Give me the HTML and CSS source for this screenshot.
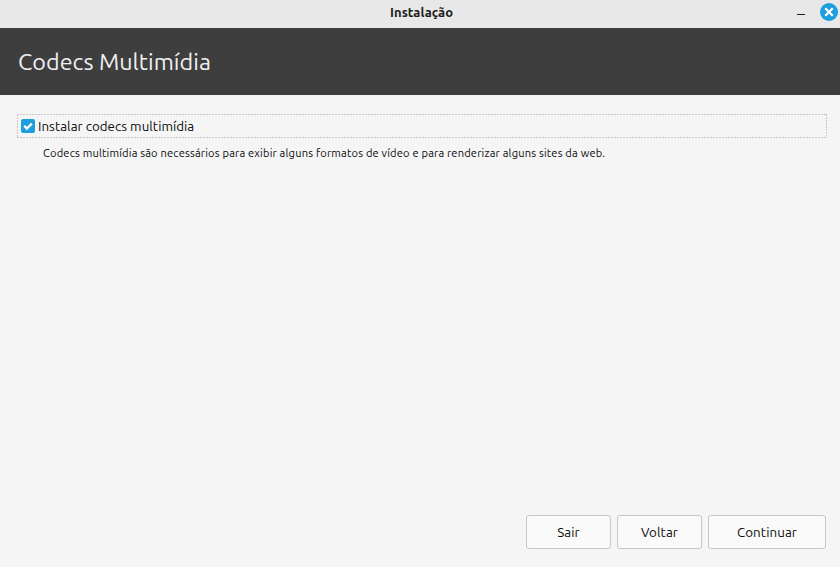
FILE: index.html
```html
<!DOCTYPE html>
<html lang="pt-BR">
<head>
<meta charset="utf-8">
<title>Instalação</title>
<link rel="stylesheet" href="styles.css">
</head>
<body>
<div class="window">
  <header class="titlebar">
    <span class="title">Instalação</span>
    <div class="controls">
      <svg width="10" height="24"><path d="M1 14.5H9" stroke="#202020"/></svg>
      <svg width="18" height="24"><circle cx="9" cy="12" r="9" fill="#1f9ede"/><path d="M5.3 8.3l7.4 7.4M12.7 8.3l-7.4 7.4" stroke="#fff" stroke-width="2.3"/></svg>
    </div>
  </header>
  <div class="banner"><h1>Codecs Multimídia</h1></div>
  <main class="content">
    <label class="option">
      <svg width="14" height="14"><rect width="14" height="14" rx="2" fill="#1f9ede"/><path d="M3.2 6.8l2.6 2.7L10.8 4.6" fill="none" stroke="#fff" stroke-width="2.3"/></svg>
      <span>Instalar codecs multimídia</span>
    </label>
    <p class="hint">Codecs multimídia são necessários para exibir alguns formatos de vídeo e para renderizar alguns sites da web.</p>
  </main>
  <footer class="actions">
    <button>Sair</button><button>Voltar</button><button class="wide">Continuar</button>
  </footer>
</div>
</body>
</html>
```
FILE: styles.css
```css
*{box-sizing:border-box}
body{margin:0;font-family:Ubuntu,"Noto Sans",sans-serif;font-size:13.333px;color:#0c0c0c}
svg{display:block;flex:none}
.window{height:567px;display:flex;flex-direction:column;background:#f5f5f5}
.titlebar{height:28px;background:#e8e8e8;display:grid;grid-template-columns:1fr auto 1fr;padding-left:3px}
.title{grid-column:2;font-weight:700;font-size:13px;line-height:25px;letter-spacing:.08px;color:#202020}
.controls{display:flex;justify-content:flex-end;gap:14px;padding-right:2px}
.banner{height:67px;background:#3e3e3e;color:#f0f0f0;padding-left:18px}
h1{margin:0;font-size:23.333px;font-weight:400;line-height:66px;letter-spacing:.03px}
.content{flex:1;padding:19px 13px 0 17px}
.option{height:24px;display:flex;align-items:center;gap:3px;padding-left:4px;white-space:nowrap;letter-spacing:.04px;
  --h:repeating-linear-gradient(90deg,#c8c8c8 0 2px,transparent 2px 3px);
  --v:repeating-linear-gradient(180deg,#c8c8c8 0 2px,transparent 2px 3px);
  background:var(--h) top/100% 1px no-repeat,var(--h) bottom/100% 1px no-repeat,var(--v) left/1px 100% no-repeat,var(--v) right/1px 100% no-repeat}
.hint{margin:5px 0 0 26px;font-size:11.111px;line-height:20px;white-space:nowrap;letter-spacing:.174px}
.actions{display:flex;justify-content:flex-end;gap:6px;padding:0 14px 18px}
button{width:85px;height:34px;border:1px solid #c7c7c7;border-radius:3px;background:#fafafa;font:inherit;letter-spacing:.1px;color:inherit;padding:0}
.wide{width:118px}
```
